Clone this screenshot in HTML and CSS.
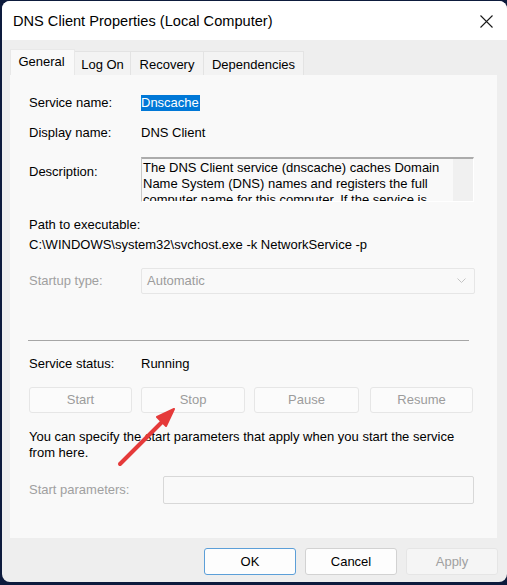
FILE: index.html
```html
<!DOCTYPE html>
<html>
<head>
<meta charset="utf-8">
<link rel="stylesheet" href="styles.css">
</head>
<body>
<div class="window">
  <div class="titlebar">
    <span class="title">DNS Client Properties (Local Computer)</span>
    <svg class="close" width="13" height="13" viewBox="0 0 13 13"><path d="M0.5 0.5 L12.5 12.5 M12.5 0.5 L0.5 12.5" stroke="#1a1a1a" stroke-width="1.1" fill="none"/></svg>
  </div>
  <div class="content">
    <div class="tabs">
      <div class="tab active">General</div>
      <div class="tab t-logon">Log On</div>
      <div class="tab t-rec">Recovery</div>
      <div class="tab t-dep">Dependencies</div>
    </div>
    <div class="panel">
      <div class="row r-name"><span class="label">Service name:</span><span class="sel">Dnscache</span></div>
      <div class="row r-disp"><span class="label">Display name:</span><span>DNS Client</span></div>
      <div class="row r-desc">
        <span class="label desc-label">Description:</span>
        <div class="descbox">
          <div class="desctext">The DNS Client service (dnscache) caches Domain Name System (DNS) names and registers the full computer name for this computer. If the service is</div>
          <div class="scroll"></div>
        </div>
      </div>
      <div class="path-label">Path to executable:</div>
      <div class="path">C:\WINDOWS\system32\svchost.exe -k NetworkService -p</div>
      <div class="row r-startup">
        <span class="label disabled">Startup type:</span>
        <div class="combo"><span>Automatic</span>
          <svg width="9" height="6" viewBox="0 0 9 6"><path d="M0.5 0.5 L4.5 4.5 L8.5 0.5" stroke="#c4c4c4" fill="none"/></svg>
        </div>
      </div>
      <div class="sep"></div>
      <div class="row r-status"><span class="label">Service status:</span><span>Running</span></div>
      <div class="btnrow">
        <div class="btn b-start">Start</div>
        <div class="btn b-stop">Stop</div>
        <div class="btn b-pause">Pause</div>
        <div class="btn b-resume">Resume</div>
      </div>
      <div class="note">You can specify the start parameters that apply when you start the service from here.</div>
      <div class="row r-params">
        <span class="label disabled plabel">Start parameters:</span>
        <div class="input"></div>
      </div>
    </div>
    <div class="footer">
      <div class="dbtn ok">OK</div>
      <div class="dbtn">Cancel</div>
      <div class="dbtn dis">Apply</div>
    </div>
  </div>
  <svg class="arrow" width="80" height="80" viewBox="0 0 80 80">
    <line x1="8" y1="72" x2="52" y2="28" stroke="#e53a3a" stroke-width="4" stroke-linecap="round"/>
    <polygon points="62,17 45,25 54,34" fill="#e53a3a" stroke="#e53a3a" stroke-width="2" stroke-linejoin="round"/>
  </svg>
</div>
</body>
</html>
```

FILE: styles.css
```css
html, body {
  margin: 0;
  padding: 0;
}
body {
  background: #0d1b3d;
  width: 507px;
  height: 585px;
  overflow: hidden;
  padding: 1px 0 0 2px;
  box-sizing: border-box;
  font-family: "Liberation Sans", Arial, sans-serif;
  font-size: 13px;
  color: #000;
}
.window {
  position: relative;
  width: 505px;
  height: 581px;
  background: #eeeeee;
  border-radius: 8px;
  overflow: hidden;
}
.titlebar {
  height: 39px;
  background: #ffffff;
  display: flex;
  align-items: center;
  padding-left: 11px;
  position: relative;
}
.title {
  font-size: 14.6px;
  color: #000;
  margin-top: 1px;
}
.close {
  position: absolute;
  left: 478px;
  top: 14px;
}
.content {
  padding: 0 0 0 8px;
}
.tabs {
  display: flex;
  align-items: flex-end;
  height: 35px;
}
.tab {
  height: 24px;
  line-height: 24px;
  background: #f3f3f3;
  border: 1px solid #e3e3e3;
  border-bottom: none;
  box-sizing: border-box;
  padding: 0;
  text-align: center;
  font-size: 13px;
}
.tab.active {
  height: 26px;
  line-height: 24px;
  width: 65px;
  background: #f9f9f9;
  border-color: #e8e8e8;
  padding-right: 2px;
}
.t-logon { width: 56px; border-left: none; padding-top: 1px; }
.t-rec { width: 73px; border-left: none; padding-top: 1px; }
.t-dep { width: 100px; border-left: none; padding-top: 1px; }
.panel {
  width: 487px;
  height: 463px;
  background: #f9f9f9;
  box-sizing: border-box;
  padding: 20px 0 0 19px;
}
.row {
  display: flex;
  align-items: center;
  line-height: 16px;
}
.label {
  width: 112px;
  flex: none;
}
.disabled { color: #a0a0a0; }
.sel {
  background: #0078d7;
  color: #fff;
  padding: 0 1px 0 0;
}
.r-disp { margin-top: 14px; }
.r-desc {
  margin-top: 16px;
  align-items: flex-start;
}
.desc-label { margin-top: 7px; }
.descbox {
  width: 333px;
  height: 45px;
  box-sizing: border-box;
  border-top: 2px solid #acacac;
  border-left: 1px solid #c8c8c8;
  border-right: 1px solid #ffffff;
  border-bottom: 1px solid #ffffff;
  background: #f9f9f9;
  display: flex;
  overflow: hidden;
}
.desctext {
  flex: 1;
  padding: 1px 0 0 1px;
  line-height: 16px;
  overflow: hidden;
}
.scroll {
  width: 20px;
  flex: none;
  background: #f0f0f0;
}
.path-label {
  margin-top: 15px;
  line-height: 16px;
}
.path {
  margin-top: 4px;
  line-height: 16px;
}
.r-startup { margin-top: 15px; }
.combo {
  width: 334px;
  height: 26px;
  box-sizing: border-box;
  border: 1px solid #e6e6e6;
  border-radius: 2px;
  background: #f9f9f9;
  color: #9c9c9c;
  display: flex;
  align-items: center;
  justify-content: space-between;
  padding: 0 8px 0 5px;
}
.sep {
  margin-top: 46px;
  width: 441px;
  height: 1px;
  background: #a6a6a6;
  margin-left: -1px;
}
.r-status { margin-top: 15px; }
.btnrow {
  display: flex;
  margin-top: 15px;
  height: 26px;
}
.btn {
  height: 26px;
  box-sizing: border-box;
  border: 1px solid #e6e6e6;
  border-radius: 3px;
  background: #fbfbfb;
  color: #9c9c9c;
  display: flex;
  align-items: center;
  justify-content: center;
  padding-bottom: 1px;
}
.b-start { width: 103px; }
.b-stop { width: 104px; margin-left: 9px; }
.b-pause { width: 105px; margin-left: 9px; }
.b-resume { width: 103px; margin-left: 11px; }
.note {
  margin-top: 16px;
  width: 450px;
  line-height: 16px;
}
.r-params { margin-top: 15px; }
.plabel { width: 134px; }
.input {
  width: 311px;
  height: 28px;
  box-sizing: border-box;
  border: 1px solid #d8d8d8;
  border-radius: 2px;
  background: #f9f9f9;
}
.footer {
  display: flex;
  padding: 10px 0 0 194px;
}
.dbtn {
  width: 92px;
  height: 27px;
  box-sizing: border-box;
  border: 1px solid #d2d2d2;
  border-radius: 3px;
  background: #fdfdfd;
  display: flex;
  align-items: center;
  justify-content: center;
  margin-right: 9px;
  font-size: 13px;
}
.dbtn.ok {
  border-color: #5c9fd8;
}
.dbtn.dis {
  background: #f5f5f5;
  border-color: #e5e5e5;
  color: #a0a0a0;
}
.arrow {
  position: absolute;
  left: 110px;
  top: 391px;
}
```
